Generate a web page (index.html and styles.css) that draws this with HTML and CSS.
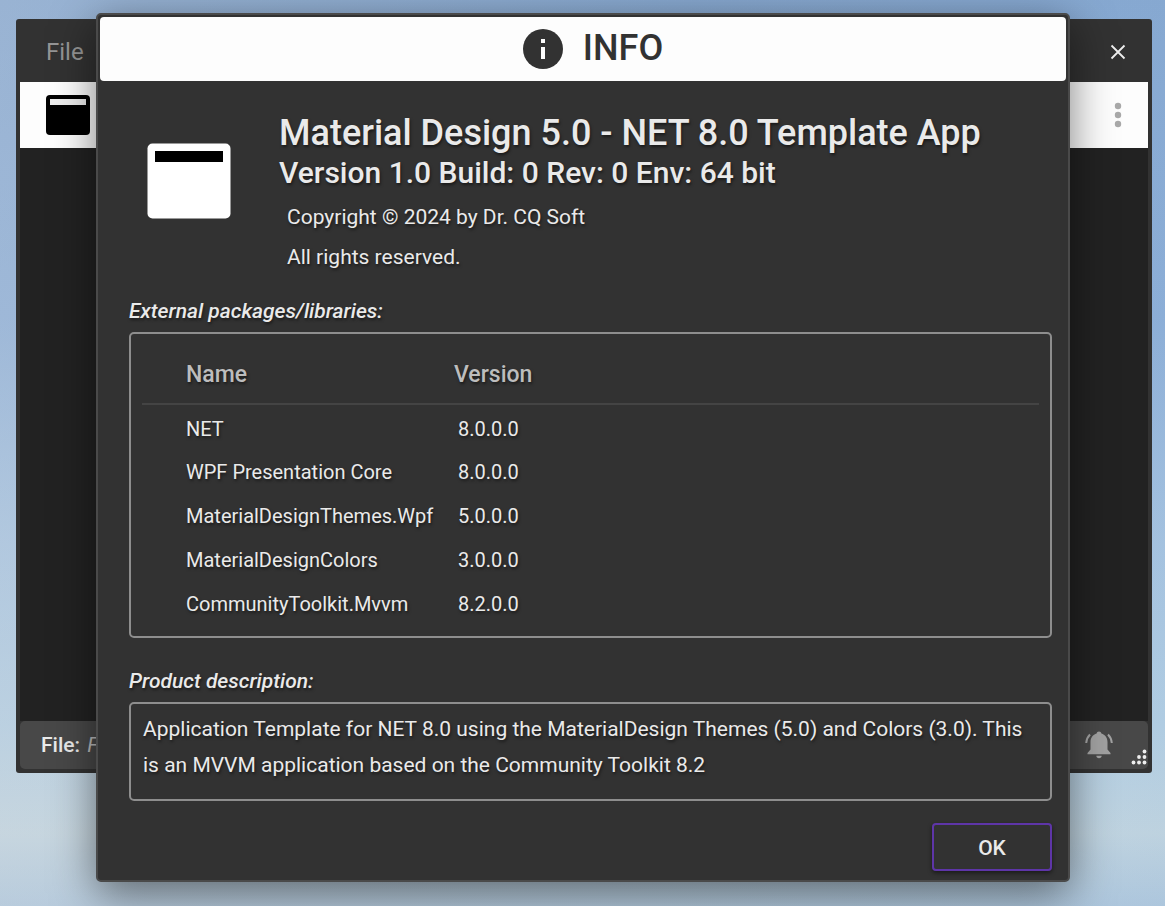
FILE: index.html
```html
<!DOCTYPE html>
<html lang="en">
<head>
<meta charset="utf-8">
<meta name="viewport" content="width=device-width, initial-scale=1">
<title>Template App</title>
<link rel="stylesheet" href="styles.css">
</head>
<body>
<main class="app">
  <header class="menubar">
    <button class="menu-item" type="button">File</button>
    <button class="icon-button" type="button" aria-label="Close">
      <svg width="16" height="16" viewBox="0 0 16 16"><path d="M1.5 1.5l13 13M14.5 1.5l-13 13" stroke="#eee" stroke-width="1.8"/></svg>
    </button>
  </header>
  <div class="toolbar">
    <svg width="46" height="42" viewBox="0 0 46 42"><rect x="1" y="1" width="44" height="40" rx="4" fill="#000"/><path d="M5 5h36v6H5z" fill="#eee"/></svg>
    <button class="icon-button" type="button" aria-label="More">
      <svg width="8" height="26" viewBox="0 0 8 26"><g fill="#a9a9a9"><circle cx="4" cy="4" r="3.200"/><circle cx="4" cy="13" r="3.200"/><circle cx="4" cy="22" r="3.200"/></g></svg>
    </button>
  </div>
  <div class="workspace"></div>
  <footer class="statusbar">
    <p class="status-file"><b>File:</b> <i>F</i></p>
    <svg width="28" height="28" viewBox="0 0 28 28"><path d="M14 .5c-1.300 0-2.200.8-2.400 2C8 3.500 5.500 6.600 5.500 11v7.500L2.500 22v1.300h23V22l-3-3.500V11c0-4.400-2.500-7.500-6.100-8.500-.2-1.200-1.100-2-2.400-2zM11.300 24.800h5.400c0 1.500-1.100 2.500-2.700 2.500s-2.700-1-2.700-2.500z" fill="#a2a2a2"/><path d="M5 3.500Q1.500 7 1.200 12M23 3.500q3.500 3.500 3.800 8.500" fill="none" stroke="#a2a2a2" stroke-width="2"/></svg>
    <svg class="grip" width="16" height="16" viewBox="0 0 16 16"><g fill="#eee"><circle cx="13.500" cy="2.500" r="1.900"/><circle cx="8" cy="8" r="1.900"/><circle cx="13.500" cy="8" r="1.900"/><circle cx="2.500" cy="13.500" r="1.900"/><circle cx="8" cy="13.500" r="1.900"/><circle cx="13.500" cy="13.500" r="1.900"/></g></svg>
  </footer>
</main>

<section class="dialog" role="dialog" aria-labelledby="dialog-title">
  <header class="dialog-header">
    <svg width="40" height="40" viewBox="0 0 40 40"><circle cx="20" cy="20" r="20" fill="#323232"/><path d="M18 10h4v4h-4zM18 18h4v12h-4z" fill="#fdfdfd"/></svg>
    <h1 id="dialog-title">INFO</h1>
  </header>
  <div class="dialog-body">
    <div class="product">
      <svg class="product-logo" width="84" height="76" viewBox="0 0 84 76"><rect x=".5" y=".5" width="83" height="75" rx="5" fill="#fff"/><path d="M8 8h68v11H8z" fill="#000"/></svg>
      <div class="product-text">
        <h2>Material Design 5.0 - NET 8.0 Template App</h2>
        <h3>Version 1.0 Build: 0 Rev: 0 Env: 64 bit</h3>
        <p>Copyright © 2024 by Dr. CQ Soft</p>
        <p>All rights reserved.</p>
      </div>
    </div>
    <h4 id="packages">External packages/libraries:</h4>
    <div class="panel packages">
      <table aria-labelledby="packages">
        <thead><tr><th class="name">Name</th><th>Version</th></tr></thead>
        <tbody>
          <tr><td>NET</td><td>8.0.0.0</td></tr>
          <tr><td>WPF Presentation Core</td><td>8.0.0.0</td></tr>
          <tr><td>MaterialDesignThemes.Wpf</td><td>5.0.0.0</td></tr>
          <tr><td>MaterialDesignColors</td><td>3.0.0.0</td></tr>
          <tr><td>CommunityToolkit.Mvvm</td><td>8.2.0.0</td></tr>
        </tbody>
      </table>
    </div>
    <h4>Product description:</h4>
    <p class="panel description">Application Template for NET 8.0 using the MaterialDesign Themes (5.0) and Colors (3.0). This is an MVVM application based on the Community Toolkit 8.2</p>
    <div class="actions"><button class="ok" type="button">OK</button></div>
  </div>
</section>
</body>
</html>
```
FILE: styles.css
```css
* { box-sizing: border-box; }
h1, h2, h3, h4, p { margin: 0; font-weight: 500; }
svg { display: block; flex: none; }
button { font: inherit; color: inherit; background: none; border: 0; padding: 0; }

body {
  margin: 0;
  min-height: 100vh;
  display: grid;
  grid-template-columns: 16px 80px minmax(0, 1fr) 82px 13px;
  align-items: start;
  font-family: Roboto, "Liberation Sans", sans-serif;
  color: #eaeaea;
  background:
    linear-gradient(90deg, rgba(195, 205, 220, .3), rgba(130, 160, 205, .05) 60%, rgba(130, 170, 220, .15)),
    linear-gradient(#87a8cf, #8eafd6 35%, #aac6e0 60%, #b8d2e3 80%, #c8d9e0 92%, #b4cbdd);
}

.app {
  grid-column: 2 / 5;
  grid-row: 1;
  margin-top: 19px;
  height: 754px;
  display: flex;
  flex-direction: column;
  padding: 0 4px 4px;
  border-radius: 3px;
  background: #323232;
}
.menubar, .toolbar, .statusbar { display: flex; align-items: center; flex: none; }
.menubar { height: 63px; justify-content: space-between; padding: 2px 22px 0 26px; }
.menu-item { font-size: 24px; color: #959595; }
.icon-button { display: grid; place-items: center; }
.toolbar { height: 66px; justify-content: space-between; padding: 0 26px 0 25px; background: #fdfdfd; }
.workspace { flex: 1; background: #222; }
.statusbar { height: 48px; padding-left: 21px; border-radius: 5px; background: #484848; }
.status-file { flex: 1; font-size: 21px; }
.status-file b { font-weight: 500; }
.status-file i { font-weight: 400; color: #bbb; margin-left: 2px; }
.grip { align-self: flex-end; margin: 0 1px 4px 18px; }

.dialog {
  grid-column: 3;
  grid-row: 1;
  z-index: 1;
  margin: 13px 0 24px;
  padding: 2px 2px 9px;
  border: 2px solid #4a4a4a;
  border-radius: 5px;
  background: #323232;
  box-shadow: 0 12px 44px rgba(0, 0, 0, .5);
}
.dialog-header {
  height: 64px;
  display: flex;
  align-items: center;
  justify-content: center;
  gap: 20px;
  padding-left: 20px;
  border-radius: 4px;
  background: #fdfdfd;
  color: #323232;
}
.dialog-header h1 { font-size: 36px; line-height: 60px; padding-bottom: 3px; }
.dialog-body { padding: 31px 14px 0 29px; text-shadow: 1px 2px 3px rgba(0, 0, 0, .5); }

.product { display: flex; gap: 48px; padding-left: 18px; }
.product-logo { margin-top: 31px; }
.product h2 { font-size: 36px; line-height: 42px; }
.product h3 { font-size: 30px; line-height: 38px; }
.product p { font-size: 21px; font-weight: 400; line-height: 40px; padding-left: 8px; }
.product h3 + p { margin-top: 5px; }

h4 { font-size: 21px; line-height: 28px; font-style: italic; }
.product + h4 { margin-top: 20px; }
.panel { border: 2px solid #8e8e8e; border-radius: 5px; margin-top: 7px; }
.packages { padding: 9px 11px 12px; margin-bottom: 29px; }
table { width: 100%; border-collapse: collapse; table-layout: fixed; }
th, td { text-align: left; padding: 0; font-weight: 400; }
th { height: 61px; padding-top: 2px; font-size: 23px; font-weight: 500; color: #bdbdbd; border-bottom: 2px solid #444; }
.name { width: 312px; }
th:first-child, td:first-child { padding-left: 44px; }
td { height: 44px; padding-top: 4px; font-size: 20px; }
td:last-child { padding-left: 4px; }
.description { min-height: 99px; padding: 7px 12px 16px; font-size: 21px; font-weight: 400; line-height: 36px; }
.actions { display: flex; justify-content: flex-end; margin-top: 22px; }
.ok {
  width: 120px;
  height: 48px;
  padding-top: 2px;
  border: 2px solid #5e35a8;
  border-radius: 4px;
  font-size: 21px;
  font-weight: 500;
  box-shadow: 0 2px 4px rgba(0, 0, 0, .5);
}
```
